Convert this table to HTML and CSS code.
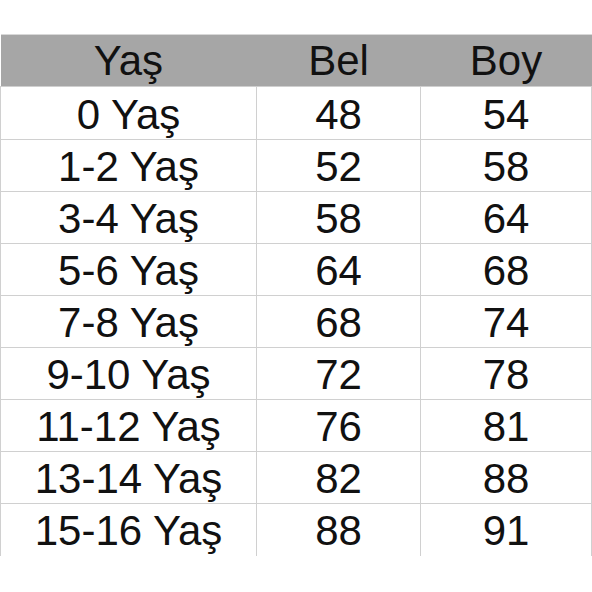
FILE: index.html
```html
<!DOCTYPE html>
<html lang="tr">
<head>
<meta charset="utf-8">
<title>Beden Tablosu</title>
<link rel="stylesheet" href="styles.css">
</head>
<body>
<table class="size-table">
  <colgroup>
    <col class="c-age">
    <col class="c-waist">
    <col class="c-height">
  </colgroup>
  <thead>
    <tr><th>Yaş</th><th>Bel</th><th>Boy</th></tr>
  </thead>
  <tbody>
    <tr><td>0 Yaş</td><td>48</td><td>54</td></tr>
    <tr><td>1-2 Yaş</td><td>52</td><td>58</td></tr>
    <tr><td>3-4 Yaş</td><td>58</td><td>64</td></tr>
    <tr><td>5-6 Yaş</td><td>64</td><td>68</td></tr>
    <tr><td>7-8 Yaş</td><td>68</td><td>74</td></tr>
    <tr><td>9-10 Yaş</td><td>72</td><td>78</td></tr>
    <tr><td>11-12 Yaş</td><td>76</td><td>81</td></tr>
    <tr><td>13-14 Yaş</td><td>82</td><td>88</td></tr>
    <tr><td>15-16 Yaş</td><td>88</td><td>91</td></tr>
  </tbody>
</table>
</body>
</html>
```
FILE: styles.css
```css
html, body {
  margin: 0;
  padding: 0;
  background: #ffffff;
}

.size-table {
  margin-top: 34px;
  width: 591px;
  border-collapse: collapse;
  table-layout: fixed;
  font-family: "Liberation Sans", Arial, sans-serif;
  font-size: 42px;
  color: #111111;
}

.c-age { width: 256px; }
.c-waist { width: 164px; }
.c-height { width: 171px; }

.size-table th {
  height: 51px;
  padding: 0;
  background: #a6a6a6;
  font-weight: normal;
  text-align: center;
  line-height: 51px;
  border-top: 1px solid #d8d8d8;
  border-bottom: 1px solid #cfcfcf;
}

.size-table td {
  height: 52px;
  padding: 2px 0 0 0;
  text-align: center;
  line-height: 49px;
  border-top: 1px solid #d0d0d0;
  border-left: 1px solid #d0d0d0;
  border-right: 1px solid #d0d0d0;
  box-sizing: border-box;
}

.size-table tbody tr:first-child td {
  border-top: none;
  height: 53px;
}
```
